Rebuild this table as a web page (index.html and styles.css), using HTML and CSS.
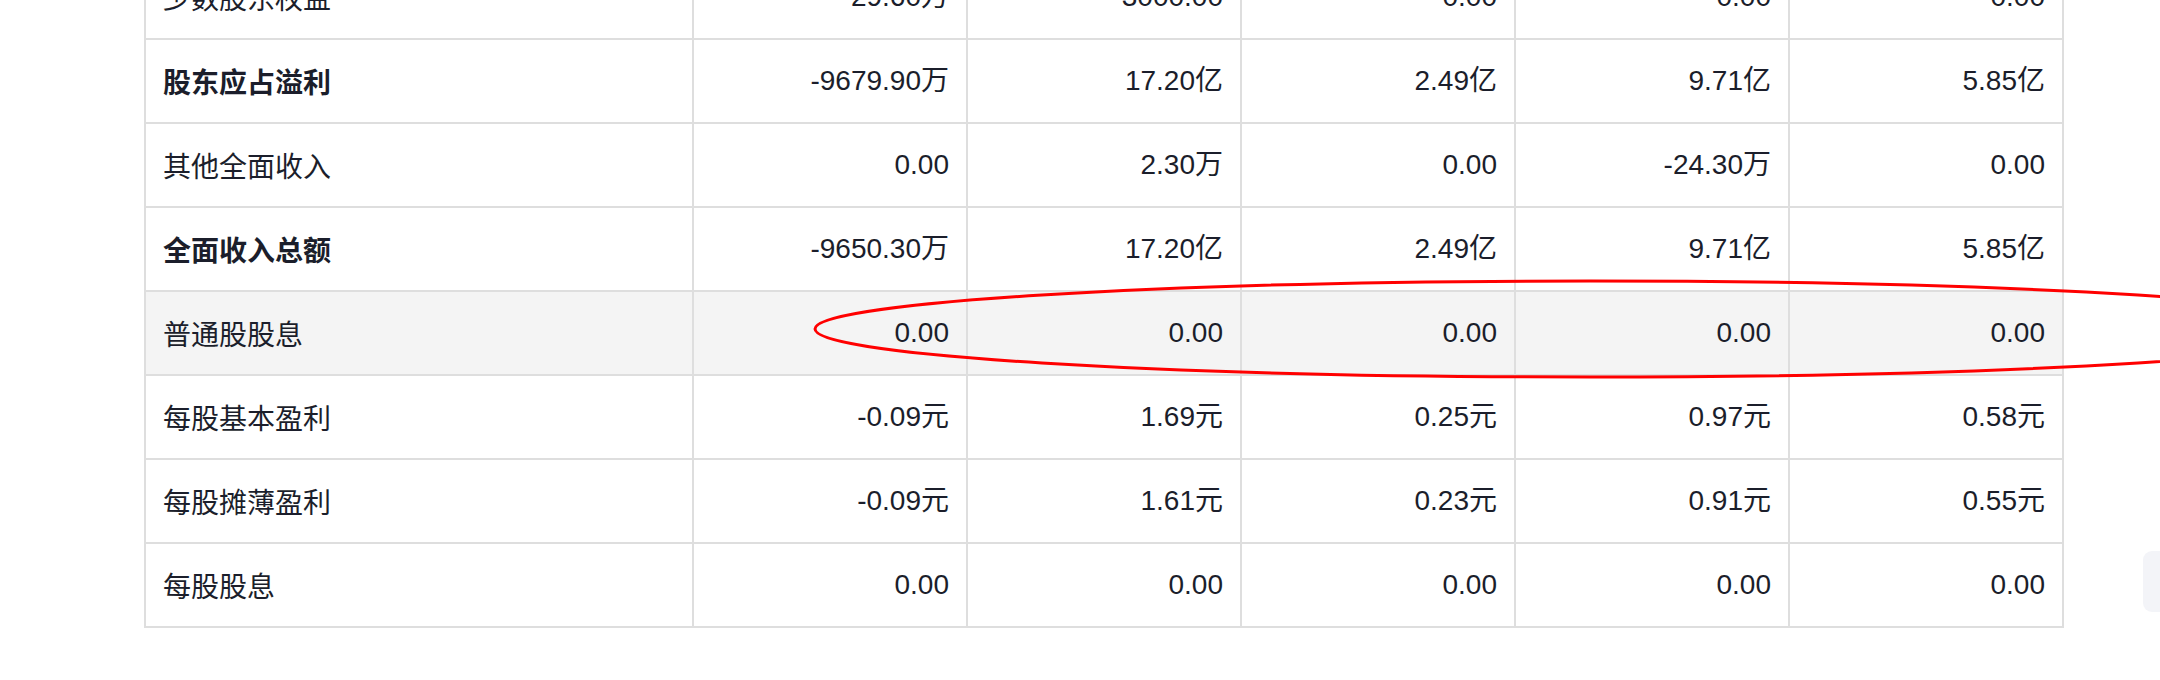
FILE: index.html
```html
<!DOCTYPE html>
<html lang="zh-CN">
<head>
<meta charset="utf-8">
<title>利润表</title>
<link rel="stylesheet" href="styles.css">
</head>
<body>
<div class="page">
  <table class="fin">
    <colgroup>
      <col class="c-label">
      <col class="c-val"><col class="c-val"><col class="c-val"><col class="c-val"><col class="c-val">
    </colgroup>
    <tbody>
      <tr><td class="lbl">少数股东权益</td><td>29.60万</td><td>3000.00</td><td>0.00</td><td>0.00</td><td>0.00</td></tr>
      <tr><td class="lbl strong">股东应占溢利</td><td>-9679.90万</td><td>17.20亿</td><td>2.49亿</td><td>9.71亿</td><td>5.85亿</td></tr>
      <tr><td class="lbl">其他全面收入</td><td>0.00</td><td>2.30万</td><td>0.00</td><td>-24.30万</td><td>0.00</td></tr>
      <tr><td class="lbl strong">全面收入总额</td><td>-9650.30万</td><td>17.20亿</td><td>2.49亿</td><td>9.71亿</td><td>5.85亿</td></tr>
      <tr class="hl"><td class="lbl">普通股股息</td><td>0.00</td><td>0.00</td><td>0.00</td><td>0.00</td><td>0.00</td></tr>
      <tr><td class="lbl">每股基本盈利</td><td>-0.09元</td><td>1.69元</td><td>0.25元</td><td>0.97元</td><td>0.58元</td></tr>
      <tr><td class="lbl">每股摊薄盈利</td><td>-0.09元</td><td>1.61元</td><td>0.23元</td><td>0.91元</td><td>0.55元</td></tr>
      <tr><td class="lbl">每股股息</td><td>0.00</td><td>0.00</td><td>0.00</td><td>0.00</td><td>0.00</td></tr>
    </tbody>
  </table>
  <svg class="mark" width="2160" height="680" viewBox="0 0 2160 680" aria-hidden="true">
    <ellipse cx="1590" cy="329" rx="775" ry="48" fill="none" stroke="#ff0000" stroke-width="3"/>
  </svg>
  <div class="side-tab"></div>
</div>
</body>
</html>
```

FILE: styles.css
```css
html, body {
  margin: 0;
  padding: 0;
  background: #ffffff;
}
body {
  width: 2160px;
  height: 680px;
  overflow: hidden;
  font-family: "Liberation Sans", "Noto Sans CJK SC", sans-serif;
  color: #1b1e2b;
}
.page {
  position: relative;
  width: 2160px;
  height: 680px;
  overflow: hidden;
}
.fin {
  border-collapse: collapse;
  table-layout: fixed;
  width: 1920px;
  margin: -46px 0 0 144px;
  font-size: 28px;
}
.c-label { width: 548px; }
.c-val { width: 274px; }
.fin td {
  height: 82px;
  padding: 0 17px;
  border: 2px solid #dedede;
  text-align: right;
  vertical-align: middle;
  white-space: nowrap;
  line-height: 1;
}
.fin td.lbl {
  text-align: left;
  font-family: "Noto Sans CJK SC", "Liberation Sans", sans-serif;
}
.fin td.strong {
  font-weight: 700;
}
.fin tr.hl td {
  background: #f4f4f4;
}
.mark {
  position: absolute;
  left: 0;
  top: 0;
  pointer-events: none;
}
.side-tab {
  position: absolute;
  right: 0;
  top: 551px;
  width: 17px;
  height: 61px;
  background: #f3f4f8;
  border-radius: 9px 0 0 9px;
}
```
